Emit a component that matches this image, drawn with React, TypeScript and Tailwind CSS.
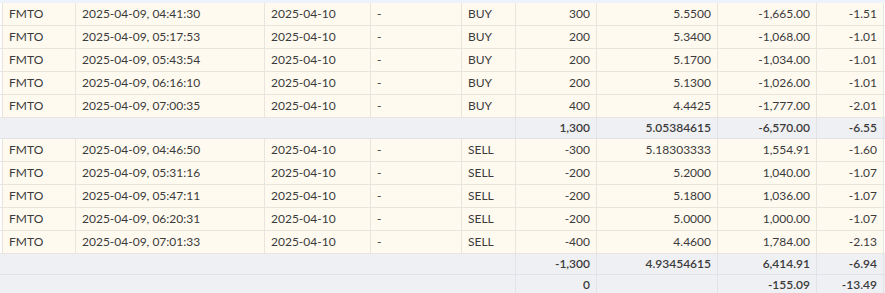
import React from "react";

type Row = [string, string, string, string, string, string, string, string, string];

const buys: Row[] = [
  ["FMTO", "2025-04-09, 04:41:30", "2025-04-10", "-", "BUY", "300", "5.5500", "-1,665.00", "-1.51"],
  ["FMTO", "2025-04-09, 05:17:53", "2025-04-10", "-", "BUY", "200", "5.3400", "-1,068.00", "-1.01"],
  ["FMTO", "2025-04-09, 05:43:54", "2025-04-10", "-", "BUY", "200", "5.1700", "-1,034.00", "-1.01"],
  ["FMTO", "2025-04-09, 06:16:10", "2025-04-10", "-", "BUY", "200", "5.1300", "-1,026.00", "-1.01"],
  ["FMTO", "2025-04-09, 07:00:35", "2025-04-10", "-", "BUY", "400", "4.4425", "-1,777.00", "-2.01"],
];
const sells: Row[] = [
  ["FMTO", "2025-04-09, 04:46:50", "2025-04-10", "-", "SELL", "-300", "5.18303333", "1,554.91", "-1.60"],
  ["FMTO", "2025-04-09, 05:31:16", "2025-04-10", "-", "SELL", "-200", "5.2000", "1,040.00", "-1.07"],
  ["FMTO", "2025-04-09, 05:47:11", "2025-04-10", "-", "SELL", "-200", "5.1800", "1,036.00", "-1.07"],
  ["FMTO", "2025-04-09, 06:20:31", "2025-04-10", "-", "SELL", "-200", "5.0000", "1,000.00", "-1.07"],
  ["FMTO", "2025-04-09, 07:01:33", "2025-04-10", "-", "SELL", "-400", "4.4600", "1,784.00", "-2.13"],
];

const widths = ["w-[73px]", "w-[189px]", "w-[106px]", "w-[91px]", "w-[54px]", "w-[81px]", "w-[121px]", "w-[99px]", "w-[68px]"];

function DataRow({ r }: { r: Row }) {
  return (
    <div className="flex h-[23px] border-b border-[#e9e5de]">
      <div className="w-[2px] shrink-0 bg-[#fdfdfc]" />
      {r.map((c, i) => (
        <div
          key={i}
          className={`${widths[i]} shrink-0 flex items-center border-l border-[#e9e5de] bg-[#fffaf0] px-[6px] ${
            i >= 5 ? "justify-end" : ""
          } ${i === 8 ? "border-r" : ""}`}
        >
          {c}
        </div>
      ))}
    </div>
  );
}

function SumRow({ v, h }: { v: [string, string, string, string]; h: string }) {
  return (
    <div className={`flex ${h} border-b border-[#e2e3e8] bg-[#eff0f3] font-semibold`}>
      <div className="w-[515px] shrink-0" />
      {v.map((c, i) => (
        <div
          key={i}
          className={`${widths[i + 5]} shrink-0 flex items-center justify-end border-l border-[#e2e3e8] px-[6px] ${
            i === 3 ? "border-r" : ""
          }`}
        >
          {c}
        </div>
      ))}
    </div>
  );
}

export default function App() {
  return (
    <div
      className="w-[885px] h-[293px] overflow-hidden bg-white text-[12px] text-[#3b3b3b]"
      style={{ fontFamily: "Lato, 'Open Sans', sans-serif" }}
    >
      <div className="h-[3px] bg-[#eef2fa]" />
      {buys.map((r, i) => (
        <DataRow key={i} r={r} />
      ))}
      <SumRow v={["1,300", "5.05384615", "-6,570.00", "-6.55"]} h="h-[21px]" />
      {sells.map((r, i) => (
        <DataRow key={i} r={r} />
      ))}
      <SumRow v={["-1,300", "4.93454615", "6,414.91", "-6.94"]} h="h-[21px]" />
      <SumRow v={["0", "", "-155.09", "-13.49"]} h="h-[21px]" />
    </div>
  );
}
